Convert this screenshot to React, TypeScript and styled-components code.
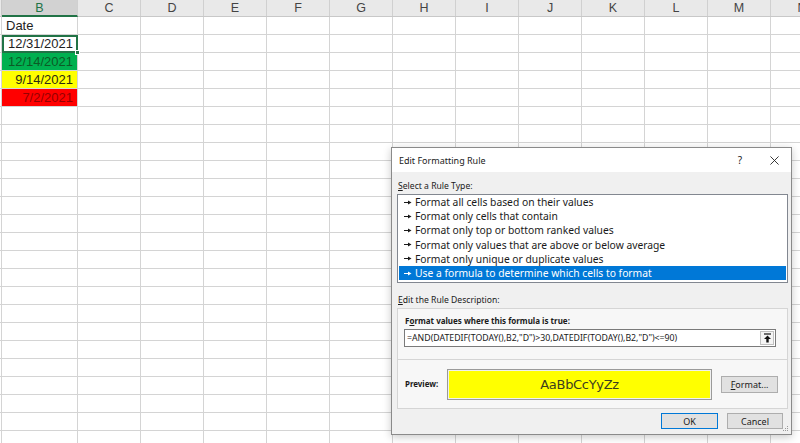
import React from "react";
import styled, { createGlobalStyle, css } from "styled-components";

const GlobalStyle = createGlobalStyle`
    html, body {
        margin: 0;
        padding: 0;
        background: #ffffff;
    }
    body {
        font-family: "Liberation Sans", Arial, sans-serif;
    }
`;

const COLUMNS = ["B", "C", "D", "E", "F", "G", "H", "I", "J", "K", "L", "M", "N"];
const ROW_COUNT = 25;

type Fill = "none" | "green" | "yellow" | "red";

const cellsB: { text: string; align: "left" | "right"; fill: Fill; selected?: boolean }[] = [
    { text: "Date", align: "left", fill: "none" },
    { text: "12/31/2021", align: "right", fill: "none", selected: true },
    { text: "12/14/2021", align: "right", fill: "green" },
    { text: "9/14/2021", align: "right", fill: "yellow" },
    { text: "7/2/2021", align: "right", fill: "red" },
];

const fills: Record<Fill, { bg: string; fg: string }> = {
    none: { bg: "#ffffff", fg: "#1e1e1e" },
    green: { bg: "#00b050", fg: "#0c5a26" },
    yellow: { bg: "#ffff00", fg: "#2b2b10" },
    red: { bg: "#ff0000", fg: "#960000" },
};

const ruleTypes = [
    "Format all cells based on their values",
    "Format only cells that contain",
    "Format only top or bottom ranked values",
    "Format only values that are above or below average",
    "Format only unique or duplicate values",
    "Use a formula to determine which cells to format",
];

const colWidth = (col: string) => (col === "B" ? 76 : 63);

export default function App() {
    return (
        <Root>
            <GlobalStyle />
            <Sheet>
                <HeaderRow>
                    <EdgeHeader />
                    {COLUMNS.map((col) => (
                        <ColHeader key={col} $width={colWidth(col)} $active={col === "B"}>
                            {col}
                        </ColHeader>
                    ))}
                </HeaderRow>
                {Array.from({ length: ROW_COUNT }).map((_, r) => (
                    <Row key={r}>
                        <EdgeCell />
                        {COLUMNS.map((col) => {
                            const data = col === "B" ? cellsB[r] : undefined;
                            const fill = fills[data?.fill ?? "none"];
                            return (
                                <Cell
                                    key={col}
                                    $width={colWidth(col)}
                                    $bg={fill.bg}
                                    $fg={fill.fg}
                                    $align={data?.align ?? "left"}
                                    $selected={!!data?.selected}
                                >
                                    {data?.text}
                                    {data?.selected && <FillHandle />}
                                </Cell>
                            );
                        })}
                    </Row>
                ))}
            </Sheet>

            <Dialog>
                <TitleBar>
                    <TitleText>Edit Formatting Rule</TitleText>
                    <TitleButtons>
                        <HelpMark>?</HelpMark>
                        <CloseIcon viewBox="0 0 10 10">
                            <path d="M0.5 0.5 L9.5 9.5 M9.5 0.5 L0.5 9.5" stroke="#222" strokeWidth="1" fill="none" />
                        </CloseIcon>
                    </TitleButtons>
                </TitleBar>
                <Body>
                    <SectionLabel>
                        <u>S</u>elect a Rule Type:
                    </SectionLabel>
                    <RuleList>
                        {ruleTypes.map((rule, i) => (
                            <RuleItem key={rule} $selected={i === ruleTypes.length - 1}>
                                <RuleArrow viewBox="0 0 8 5">
                                    <path d="M0 2.5 H5" stroke="currentColor" strokeWidth="1" />
                                    <path d="M4 0.5 L7.5 2.5 L4 4.5 Z" fill="currentColor" />
                                </RuleArrow>
                                {rule}
                            </RuleItem>
                        ))}
                    </RuleList>
                    <SectionLabel $top={10}>
                        <u>E</u>dit the Rule Description:
                    </SectionLabel>
                    <DescriptionPanel>
                        <FormulaSection>
                            <BoldLabel>
                                F<u>o</u>rmat values where this formula is true:
                            </BoldLabel>
                            <FormulaInput>
                                <FormulaText>=AND(DATEDIF(TODAY(),B2,"D")&gt;30,DATEDIF(TODAY(),B2,"D")&lt;=90)</FormulaText>
                                <CollapseButton>
                                    <svg width="9" height="10" viewBox="0 0 9 10">
                                        <path d="M1 1 H8" stroke="#111" strokeWidth="1.2" />
                                        <path d="M4.5 2.5 L8 6 H5.7 V9.5 H3.3 V6 H1 Z" fill="#111" />
                                    </svg>
                                </CollapseButton>
                            </FormulaInput>
                        </FormulaSection>
                        <PreviewSection>
                            <PreviewLabel>Preview:</PreviewLabel>
                            <PreviewBox>AaBbCcYyZz</PreviewBox>
                            <DialogButton $width={57}>
                                <u>F</u>ormat...
                            </DialogButton>
                        </PreviewSection>
                    </DescriptionPanel>
                    <Footer>
                        <DialogButton $width={57} $primary>
                            OK
                        </DialogButton>
                        <DialogButton $width={56}>Cancel</DialogButton>
                    </Footer>
                </Body>
                <ResizeGrip viewBox="0 0 6 6">
                    <rect x="4" y="0" width="1" height="1" fill="#999" />
                    <rect x="2" y="2" width="1" height="1" fill="#999" />
                    <rect x="4" y="2" width="1" height="1" fill="#999" />
                    <rect x="0" y="4" width="1" height="1" fill="#999" />
                    <rect x="2" y="4" width="1" height="1" fill="#999" />
                    <rect x="4" y="4" width="1" height="1" fill="#999" />
                </ResizeGrip>
            </Dialog>
        </Root>
    );
}

const Root = styled.div`
    position: relative;
    width: 800px;
    height: 443px;
    overflow: hidden;
    background: #ffffff;
`;

const Sheet = styled.div`
    display: flex;
    flex-direction: column;
`;

const HeaderRow = styled.div`
    display: flex;
    height: 17px;
    background: #e9e9e9;
    border-bottom: 1px solid #c8c8c8;
    box-sizing: border-box;
`;

const EdgeHeader = styled.div`
    flex: 0 0 2px;
    border-right: 1px solid #c8c8c8;
    box-sizing: border-box;
`;

const ColHeader = styled.div<{ $width: number; $active: boolean }>`
    flex: 0 0 ${({ $width }) => $width}px;
    box-sizing: border-box;
    display: flex;
    align-items: center;
    justify-content: center;
    font-family: "Liberation Sans", Arial, sans-serif;
    font-size: 12.5px;
    color: #444444;
    border-right: 1px solid #d0d0d0;
    overflow: hidden;

    ${({ $active }) =>
        $active &&
        css`
            background: #d2d2d2;
            color: #217346;
            border-bottom: 2px solid #217346;
            margin-bottom: -1px;
        `}
`;

const Row = styled.div`
    display: flex;
    height: 18px;
`;

const EdgeCell = styled.div`
    flex: 0 0 2px;
    border-right: 1px solid #d4d4d4;
    border-bottom: 1px solid #d4d4d4;
    box-sizing: border-box;
`;

const Cell = styled.div<{ $width: number; $bg: string; $fg: string; $align: "left" | "right"; $selected: boolean }>`
    position: relative;
    flex: 0 0 ${({ $width }) => $width}px;
    box-sizing: border-box;
    display: flex;
    align-items: flex-end;
    justify-content: ${({ $align }) => ($align === "right" ? "flex-end" : "flex-start")};
    padding: 0 4px 1px;
    background: ${({ $bg }) => $bg};
    color: ${({ $fg }) => $fg};
    border-right: 1px solid #d4d4d4;
    border-bottom: 1px solid #d4d4d4;
    font-family: "Liberation Sans", Arial, sans-serif;
    font-size: 13px;
    line-height: 15px;
    white-space: nowrap;

    ${({ $selected }) =>
        $selected &&
        css`
            outline: 2px solid #217346;
            outline-offset: -2px;
        `}
`;

const FillHandle = styled.span`
    position: absolute;
    right: -3px;
    bottom: -3px;
    width: 5px;
    height: 5px;
    background: #217346;
    border: 1px solid #ffffff;
    box-sizing: border-box;
    z-index: 1;
`;

const Dialog = styled.div`
    position: absolute;
    left: 391px;
    top: 147px;
    width: 401px;
    height: 288px;
    box-sizing: border-box;
    border: 1px solid #8a8a8a;
    background: #f0f0f0;
    box-shadow: 0 2px 8px rgba(0, 0, 0, 0.22);
    display: flex;
    flex-direction: column;
    font-family: "Noto Sans", "Open Sans", sans-serif;
    font-size: 8.6px;
    color: #1a1a1a;
`;

const TitleBar = styled.div`
    height: 24px;
    flex: 0 0 24px;
    background: #ffffff;
    display: flex;
    align-items: center;
    justify-content: space-between;
    padding: 0 12px 0 7px;
`;

const TitleText = styled.span`
    font-size: 9px;
    color: #1a1a1a;
`;

const TitleButtons = styled.div`
    display: flex;
    align-items: center;
    gap: 28px;
`;

const HelpMark = styled.span`
    font-size: 10px;
    color: #222;
`;

const CloseIcon = styled.svg`
    width: 9px;
    height: 9px;
`;

const Body = styled.div`
    flex: 1;
    display: flex;
    flex-direction: column;
    padding: 0 3px 0 5px;
`;

const SectionLabel = styled.div<{ $top?: number }>`
    margin-top: ${({ $top }) => $top ?? 7}px;
    height: 14px;
    line-height: 14px;
    padding-left: 1px;
    white-space: nowrap;

    u {
        text-decoration-thickness: 1px;
        text-underline-offset: 1px;
    }
`;

const RuleList = styled.div`
    margin-top: 1px;
    height: 89px;
    box-sizing: border-box;
    border: 1px solid #828790;
    background: #ffffff;
    padding: 0 1px;
    display: flex;
    flex-direction: column;
`;

const RuleItem = styled.div<{ $selected: boolean }>`
    height: 14.2px;
    display: flex;
    align-items: center;
    gap: 3px;
    padding-left: 5px;
    white-space: nowrap;
    font-size: 10.3px;
    color: ${({ $selected }) => ($selected ? "#ffffff" : "#1a1a1a")};
    background: ${({ $selected }) => ($selected ? "#0078d7" : "transparent")};
`;

const RuleArrow = styled.svg`
    width: 8px;
    height: 5px;
    flex: 0 0 8px;
`;

const DescriptionPanel = styled.div`
    margin-top: 1px;
    height: 101px;
    box-sizing: border-box;
    border: 1px solid #d5d5d5;
    background: #f7f7f7;
    display: flex;
    flex-direction: column;
`;

const FormulaSection = styled.div`
    height: 51px;
    box-sizing: border-box;
    border-bottom: 1px solid #d5d5d5;
    padding: 5px 11px 0 6px;
    display: flex;
    flex-direction: column;
    gap: 2px;
`;

const BoldLabel = styled.div`
    font-weight: 700;
    font-size: 8px;
    line-height: 13px;
    padding-left: 1px;
    white-space: nowrap;
`;

const PreviewLabel = styled(BoldLabel)`
    width: 42px;
    flex: 0 0 42px;
    padding-left: 0;
    font-size: 7.9px;
`;

const FormulaInput = styled.div`
    height: 18px;
    box-sizing: border-box;
    border: 1px solid #7a7a7a;
    background: #ffffff;
    display: flex;
    align-items: center;
    justify-content: space-between;
    padding: 0 1px 0 2px;
`;

const FormulaText = styled.span`
    font-size: 8.75px;
    white-space: nowrap;
    color: #1a1a1a;
`;

const CollapseButton = styled.div`
    width: 14px;
    height: 14px;
    box-sizing: border-box;
    border: 1px solid #c0c0c0;
    background: #f4f4f4;
    display: flex;
    align-items: center;
    justify-content: center;
`;

const PreviewSection = styled.div`
    flex: 1;
    display: flex;
    align-items: center;
    padding: 0 9px 0 7px;
`;

const PreviewBox = styled.div`
    width: 266px;
    height: 31px;
    box-sizing: border-box;
    border: 1px solid #9a9a9a;
    box-shadow: inset 0 0 0 1px #f0f0f0;
    background: #ffff00;
    display: flex;
    align-items: center;
    justify-content: center;
    font-family: "DejaVu Sans", "Liberation Sans", sans-serif;
    font-size: 13px;
    letter-spacing: -0.3px;
    color: #3d3d1f;
    margin-right: 9px;
`;

const DialogButton = styled.div<{ $width: number; $primary?: boolean }>`
    width: ${({ $width }) => $width}px;
    height: 17px;
    box-sizing: border-box;
    border: 1px solid ${({ $primary }) => ($primary ? "#0078d7" : "#adadad")};
    background: #e1e1e1;
    display: flex;
    align-items: center;
    justify-content: center;
    font-size: 9px;
    color: #1a1a1a;
`;

const Footer = styled.div`
    margin-top: 4px;
    display: flex;
    justify-content: flex-end;
    gap: 9px;
    padding-right: 5px;

    ${DialogButton} {
        height: 16px;
    }
`;

const ResizeGrip = styled.svg`
    position: absolute;
    right: 2px;
    bottom: 2px;
    width: 6px;
    height: 6px;
`;
